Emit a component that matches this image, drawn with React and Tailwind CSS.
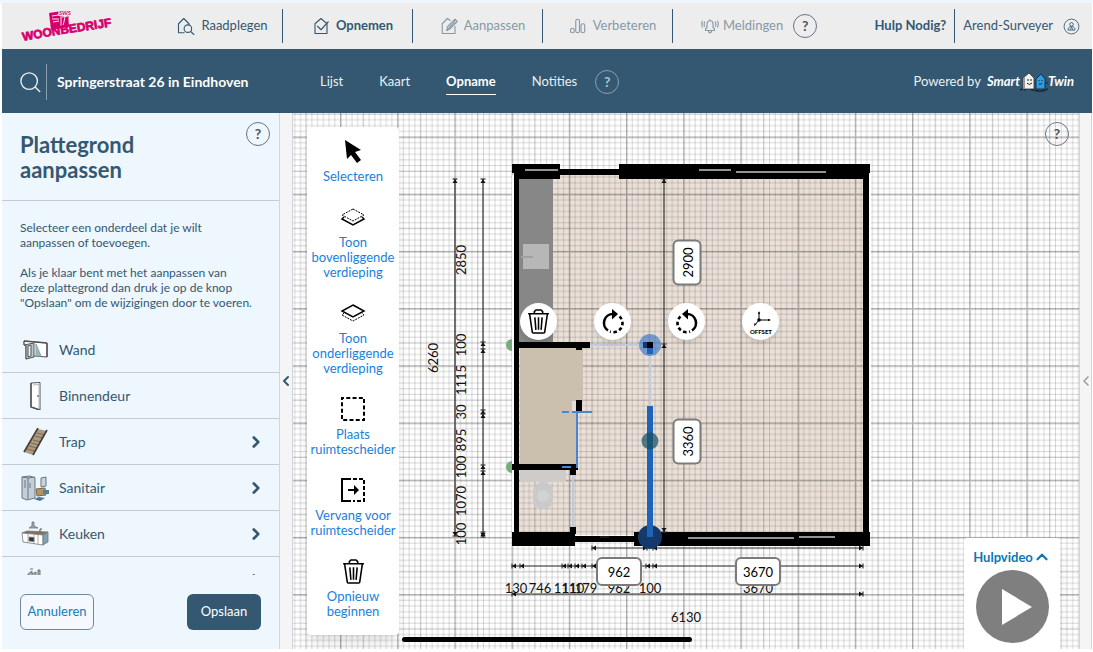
import { useState } from 'react';
import { ChevronLeft, ChevronRight, ChevronUp } from 'lucide-react';

/* ---------- small icons ---------- */

function Svg({ size = 18, children, className = '', box = 24, sw = 1.5 }) {
  return (
    <svg
      width={size}
      height={size}
      viewBox={`0 0 ${box} ${box}`}
      fill="none"
      stroke="currentColor"
      strokeWidth={sw}
      strokeLinejoin="round"
      className={`shrink-0 ${className}`}
      aria-hidden="true"
    >
      {children}
    </svg>
  );
}

const HouseSearchIcon = () => (
  <Svg size={18}>
    <path d="M10 21H2V9l7-7 7 7v2" />
    <circle cx="14.500" cy="15.500" r="5" />
    <path d="M18 19l5 5" />
  </Svg>
);

const HouseCheckIcon = () => (
  <Svg size={18}>
    <path d="M4 22V9l8-7 8 7v13z" />
    <path d="M7 12l5 5 10-11" />
  </Svg>
);

const HouseEditIcon = () => (
  <Svg size={18}>
    <path d="M20 12v10H3V9l7-7 4 3" />
    <path d="M9 18l1-5L20 3l3 3-10 10z" />
    <path d="M9 18L20 6" />
  </Svg>
);

const ChartIcon = () => (
  <Svg size={18}>
    <rect x="2" y="15" width="5" height="6" rx="2.500" />
    <rect x="9" y="3" width="5" height="18" rx="2.500" />
    <rect x="16" y="9" width="5" height="12" rx="2.500" />
  </Svg>
);

const BellIcon = () => (
  <Svg size={18}>
    <path d="M6 18v-2l2-2V9a4 4 0 0 1 8 0v5l2 2v2z" />
    <path d="M10 18a2 3 0 0 0 4 0M12 3v2" />
    <path d="M5 6c-1 2-1 5 0 7M2 5c-2 3-1 6 0 9M19 6c1 2 1 5 0 7M22 5c2 3 1 6 0 9" />
  </Svg>
);

const UserIcon = () => (
  <Svg size={17} sw={1.2}>
    <circle cx="12" cy="12" r="10.500" />
    <circle cx="12" cy="9" r="2.500" />
    <path d="M7 17c0-3 2-5 5-5s5 2 5 5zM10 17l2-4 2 4" />
  </Svg>
);

const SearchIcon = () => (
  <Svg size={22}>
    <circle cx="10" cy="11" r="9" />
    <path d="M16.500 17.500L22 23" />
  </Svg>
);

const TrashIcon = ({ size }) => (
  <Svg size={size} sw={1.5}>
    <path d="M2 4.500h20M8 4V2.500L9.500 1h5L16 2.500V4M3.500 5l2.500 17q0 1 1 1h10q1 0 1-1l2.500-17" />
    <path d="M8.500 8l1 12M12 8v12M15.500 8l-1 12" />
  </Svg>
);

const CursorIcon = () => (
  <svg width="26" height="26" viewBox="0 0 26 26" aria-hidden="true">
    <path d="M5 2l16 10-6 2 6 8-4 3-6-8-4 4z" fill="black" />
  </svg>
);

const LayersIcon = ({ upperDashed }) => (
  <svg width="26" height="20" viewBox="0 0 26 20" fill="none" stroke="black" aria-hidden="true">
    {upperDashed ? (
      <>
        <path d="M13 2l11 6-11 6L2 8z" strokeDasharray="2 1" />
        <path d="M4 10l-2 2 11 6 11-6-2-2" strokeWidth="1.500" />
      </>
    ) : (
      <>
        <path d="M13 2l11 6-11 6L2 8z" strokeWidth="1.500" />
        <path d="M4 10l-2 2 11 6 11-6-2-2" strokeDasharray="2 1" />
      </>
    )}
  </svg>
);

const DashedBoxIcon = () => (
  <svg width="26" height="26" viewBox="0 0 26 26" fill="none" stroke="black" strokeWidth="2" aria-hidden="true">
    <path d="M2 2h22v22H2z" strokeDasharray="4 2.280" strokeDashoffset="2" />
  </svg>
);

const ReplaceBoxIcon = () => (
  <svg width="26" height="26" viewBox="0 0 26 26" fill="none" stroke="black" strokeWidth="2" aria-hidden="true">
    <path d="M11 2H2v22h9" />
    <path d="M13 2h11v22H13" strokeDasharray="4 2" />
    <path d="M8 13h8" />
    <path d="M14 8l5 5-5 5z" fill="black" stroke="none" />
  </svg>
);

const RotateIcon = ({ mirrored }) => (
  <svg width="26" height="26" viewBox="0 0 26 26" fill="none" stroke="black" strokeWidth="2.600" aria-hidden="true">
    <g transform={mirrored ? 'translate(26 0) scale(-1 1)' : undefined}>
      <path d="M8 21.500a9 9 0 0 1 5-16.500" />
      <path d="M12 0l6 5-6 5.500z" fill="black" stroke="none" />
      <path d="M19.500 7.500a9 9 0 0 1-9.500 15" strokeDasharray="3.500 2.500" />
    </g>
  </svg>
);

const OffsetIcon = () => (
  <svg width="30" height="30" viewBox="0 0 30 30" fill="none" stroke="black" strokeWidth="1" aria-hidden="true">
    <path d="M13 13V5M13 13h11M13 13l-4 5" />
    <circle cx="13" cy="13" r="1.800" fill="black" stroke="none" />
    <path d="M12 7l1-3 1 3zM22 12l3 1-3 1zM8 19l.500-3 2 1.500z" fill="black" stroke="none" />
    <text x="15" y="27" textAnchor="middle" fontSize="6" fontWeight="900" fill="black" stroke="none">
      OFFSET
    </text>
  </svg>
);

/* ---------- part illustrations ---------- */

const WallArt = () => (
  <svg width="28" height="28" viewBox="0 0 28 28" stroke="#555" strokeWidth="1" aria-hidden="true">
    <path d="M3 5l23 2v14l-13-1L5 23V10L3 9z" fill="#fff" />
    <path d="M3 5v4l10-2v14l-8 2V9" fill="#bcc8ce" />
    <path d="M7 10l3-1v11l-3 1z" fill="#e9eef0" />
    <path d="M15 20V8l5 12z" fill="#9fb6c2" stroke="#8aa" />
    <path d="M3 5l23 2M26 7v14" strokeWidth="1.500" />
  </svg>
);

const DoorArt = () => (
  <svg width="28" height="28" viewBox="0 0 28 28" stroke="#555" strokeWidth="1" aria-hidden="true">
    <path d="M10 1l9-.500V28l-9-3z" fill="#fff" />
    <path d="M12 3l6-.500V26" fill="none" stroke="#bbb" />
    <path d="M10 1v24l9 3" fill="none" strokeWidth="1.500" />
    <circle cx="17" cy="14" r="1" fill="#777" stroke="none" />
  </svg>
);

const StairsArt = () => (
  <svg width="28" height="28" viewBox="0 0 28 28" aria-hidden="true">
    <path d="M17 1l9 2L12 27l-9-3z" fill="#ab9a80" />
    <path d="M16 5l8 2M14 8l8 2M12 12l8 2M10 15l8 2M8 18l8 2M6 21l8 2" stroke="#7b6a54" />
    <path d="M17 0L3 24M26 2L12 27" stroke="#4a4038" strokeWidth="1.700" />
  </svg>
);

const SanitaryArt = () => (
  <svg width="28" height="28" viewBox="0 0 28 28" stroke="#6b7680" strokeWidth="1" aria-hidden="true">
    <path d="M1 3l8-1 5 2v20l-8 2-5-2z" fill="#c3ced8" />
    <path d="M7 4v21M1 3l6 1 7-1M9 9v5M4 6v8" fill="none" />
    <path d="M20 4l5-1v9l-5 1z" fill="#c9d4dd" />
    <path d="M15 15l9-1 1 7-9 1z" fill="#b09468" stroke="#7c6845" />
    <path d="M22 16h6v4h-6z" fill="#4f83a6" stroke="none" />
    <path d="M13 25l5-2 6 1-5 3z" fill="#3b79a5" stroke="none" />
  </svg>
);

const KitchenArt = () => (
  <svg width="28" height="28" viewBox="0 0 28 28" stroke="#777" strokeWidth=".800" aria-hidden="true">
    <path d="M11 2h2v4l4 2H8l3-2z" fill="#9aa4ab" />
    <path d="M1 13l5-2 21 1-5 3z" fill="#8a6f55" />
    <path d="M1 13l21 2v10L2 22z" fill="#fff" />
    <path d="M22 15l5-3v10l-5 3z" fill="#7fa1b5" />
    <path d="M7 14v9M13 15v9M17 15v9" fill="none" stroke="#999" />
    <path d="M8 17l5 .500v4l-5-.500z" fill="#333" />
    <path d="M19 12V9h2" fill="none" stroke="#333" />
  </svg>
);

const InstallationArt = () => (
  <svg width="28" height="28" viewBox="0 0 28 28" stroke="#777" strokeWidth="1" aria-hidden="true">
    <path d="M7 8l4-3v3l4-2v8H7zM17 4h2v10h-2z" fill="#a6adb2" />
    <path d="M9 3h3" />
  </svg>
);

/* ---------- header ---------- */

function HelpButton({ tone = 'dark' }) {
  const tones = {
    dark: 'border-gray-500 text-gray-600',
    light: 'border-[#8ba1b1] text-[#b5c3cd]',
  };
  return (
    <button
      type="button"
      aria-label="Help"
      className={`flex size-6 shrink-0 items-center justify-center rounded-full border text-sm font-bold ${tones[tone]}`}
    >
      ?
    </button>
  );
}

const Logo = () => (
  <svg width="96" height="34" viewBox="0 0 96 34" className="shrink-0" aria-label="Woonbedrijf" role="img">
    <path d="M29 4l19-3 1 17-18 3z" fill="#d6006d" />
    <path d="M32 7l7-1M32 10h7M33 13l6-1M41 3v14M45 8l-2 9M42 8l6-1" stroke="#ededed" strokeWidth="1" />
    <text x="39" y="6" fontSize="6" fontStyle="italic" fontWeight="700" fill="#d6006d" stroke="#ededed" strokeWidth="2" paintOrder="stroke">
      SWS
    </text>
    <path id="logo-curve" d="M3 32C30 27 55 23 95 17" fill="none" />
    <text className="font-['Liberation_Sans']" fontSize="12" fontWeight="700" fill="#d6006d" stroke="#d6006d" strokeWidth=".700">
      <textPath href="#logo-curve">WOONBEDRIJF</textPath>
    </text>
  </svg>
);

const mainNav = [
  { label: 'Raadplegen', icon: HouseSearchIcon, style: 'text-[#345871]' },
  { label: 'Opnemen', icon: HouseCheckIcon, style: 'text-[#345871] font-bold' },
  { label: 'Aanpassen', icon: HouseEditIcon, style: 'text-[#8799a6]' },
  { label: 'Verbeteren', icon: ChartIcon, style: 'text-[#8799a6]' },
];

function TopBar() {
  return (
    <header className="flex h-[46px] shrink-0 items-center bg-[#ededed] text-[13px]">
      <div className="w-[151px] shrink-0 pl-[18px]">
        <Logo />
      </div>
      <nav className="flex items-center">
        {mainNav.map(({ label, icon: Icon, style }) => (
          <a
            key={label}
            href="#"
            className={`flex h-[34px] w-[130px] items-center justify-center gap-1.5 border-r border-[#345871] pl-2.5 ${style}`}
          >
            <Icon />
            {label}
          </a>
        ))}
        <a href="#" className="ml-7 flex items-center gap-1 text-[#8799a6]">
          <BellIcon />
          Meldingen
        </a>
      </nav>
      <div className="ml-2.5">
        <HelpButton />
      </div>
      <div className="ml-auto flex items-center pr-3 text-[#345871]">
        <a href="#" className="pr-2 font-bold">Hulp Nodig?</a>
        <a href="#" className="flex h-[34px] items-center gap-2.5 border-l border-[#345871] pl-2">
          Arend-Surveyer
          <UserIcon />
        </a>
      </div>
    </header>
  );
}

const TwinHouses = () => (
  <svg width="28" height="20" viewBox="0 0 28 20" aria-hidden="true">
    <path d="M0 18q7-3 14 0t14-1" stroke="#1b2b38" strokeWidth="1.500" fill="none" />
    <path d="M3 17V6l6-5 5 5v11z" fill="#f3f1ee" stroke="#333" strokeWidth=".800" />
    <path d="M3 6v11h2V5z" fill="#999" />
    <path d="M16 17V7l5-5 4 5v10z" fill="#2f9be0" stroke="#123" strokeWidth=".800" />
    <path d="M8 7v2M11 7v2M7 11q2 3 5 0M19 8v1M22 8v1M19 12q2 1 3-1M5 17v2M12 17v2M18 17v2M23 17v2M25 11h3" stroke="#222" fill="none" />
  </svg>
);

function SubBar() {
  return (
    <div className="flex h-16 shrink-0 items-center bg-[#345871] pt-0.5 text-[13px] text-[#e9f0f5]">
      <div className="flex w-[278px] shrink-0 items-center pl-[18px]">
        <button type="button" aria-label="Zoeken">
          <SearchIcon />
        </button>
        <h1 className="ml-1 flex h-9 items-center border-l border-[#8ba1b1] pl-2.5 text-sm font-bold text-white">
          Springerstraat 26 in Eindhoven
        </h1>
      </div>
      <nav className="ml-10 flex items-center gap-9">
        <a href="#">Lijst</a>
        <a href="#">Kaart</a>
        <a href="#" className="-mb-px border-b border-white py-0.5 font-bold text-white">Opname</a>
        <a href="#">Notities</a>
      </nav>
      <div className="ml-[18px]">
        <HelpButton tone="light" />
      </div>
      <div className="ml-auto flex items-center pr-[18px]">
        <span className="mr-1.5">Powered by</span>
        <span className="font-bold text-white italic">Smart</span>
        <TwinHouses />
        <span className="font-bold text-white italic">Twin</span>
      </div>
    </div>
  );
}

/* ---------- side panel ---------- */

const parts = [
  { label: 'Wand', art: WallArt },
  { label: 'Binnendeur', art: DoorArt },
  { label: 'Trap', art: StairsArt, more: true },
  { label: 'Sanitair', art: SanitaryArt, more: true },
  { label: 'Keuken', art: KitchenArt, more: true },
  { label: '', art: InstallationArt, more: true },
];

function SidePanel() {
  return (
    <aside className="flex w-[278px] shrink-0 flex-col border-r border-gray-300 bg-[#eef6fe] text-[#345871]">
      <div className="flex items-start justify-between border-b border-[#c6cbd0] pt-[9px] pr-[9px] pb-[18px] pl-[18px]">
        <h2 className="w-40 pt-2.5 text-[22px] leading-[25px] font-bold">Plattegrond aanpassen</h2>
        <HelpButton />
      </div>
      <div className="min-h-0 flex-1 overflow-hidden">
        <div className="space-y-[15px] px-[18px] pt-[19px] pb-[17px] text-xs leading-[15px]">
          <p>
            Selecteer een onderdeel dat je wilt
            <br />
            aanpassen of toevoegen.
          </p>
          <p>
            Als je klaar bent met het aanpassen van
            <br />
            deze plattegrond dan druk je op de knop
            <br />
            "Opslaan" om de wijzigingen door te voeren.
          </p>
        </div>
        <ul>
          {parts.map(({ label, art: Art, more }) => (
            <li key={label} className="border-b border-[#c6cbd0]">
              <button
                type="button"
                aria-label={label || 'Installatie'}
                className="flex h-[45px] w-full items-center pr-3.5 pl-[19px] text-left text-sm"
              >
                <Art />
                <span className="ml-2.5 flex-1">{label}</span>
                {more && <ChevronRight size={18} strokeWidth={3.5} />}
              </button>
            </li>
          ))}
        </ul>
      </div>
      <div className="flex justify-between px-[18px] pt-[19px] pb-[19px] text-[13px]">
        <button type="button" className="h-9 w-[74px] rounded-md border border-[#6f8aa0] bg-white/40 text-[#147dba]">
          Annuleren
        </button>
        <button type="button" className="h-9 w-[74px] rounded-md bg-[#345871] text-white">
          Opslaan
        </button>
      </div>
    </aside>
  );
}

/* ---------- floor plan ---------- */

const PERIOD = 57.2;
const steps = [1, 2, 3, 4, 5, 6, 7, 8, 9];

function Grid() {
  return (
    <pattern id="grid" x="47" y="23.500" width={PERIOD} height={PERIOD} patternUnits="userSpaceOnUse">
      {steps.map((i) => (
        <g key={i} stroke="black" strokeWidth="1">
          <path d={`M${(i * PERIOD) / 10 + 0.5} 0v58`} strokeOpacity={i === 4 ? 0.26 : 0.15} />
          <path d={`M0 ${(i * PERIOD) / 10 + 0.5}h58`} strokeOpacity={i === 6 ? 0.26 : 0.15} />
        </g>
      ))}
      <path d="M.700 0v58M0 .700h58" stroke="black" strokeOpacity=".320" strokeWidth="1.400" />
    </pattern>
  );
}

// Dimension line with an arrow and a stop at each mark
function Ruler({ at, marks, vertical }) {
  const first = marks[0];
  const last = marks[marks.length - 1];
  return (
    <g
      transform={vertical ? `translate(${at} 0) rotate(90) scale(1 -1)` : `translate(0 ${at})`}
      stroke="#333"
      fill="#111"
      strokeWidth="1.200"
    >
      <path d={`M${first} 0H${last}`} />
      {marks.map((m) => (
        <g key={m}>
          <path d={`M${m} -2.500v5`} />
          <path
            d={m === last ? `M${m - 4} -2.500l4 2.500-4 2.500z` : `M${m + 4} -2.500l-4 2.500 4 2.500z`}
            stroke="none"
          />
        </g>
      ))}
    </g>
  );
}

const leftSizes = [
  ['2850', 147],
  ['100', 232],
  ['1115', 267],
  ['30', 299],
  ['895', 327],
  ['100', 354],
  ['1070', 388],
  ['100', 421],
];

const bottomSizes = [
  ['130', 223],
  ['746', 247],
  ['111', 272],
  ['110', 280],
  ['179', 293],
  ['962', 326],
  ['100', 357],
  ['3670', 465],
];

function FloorPlan() {
  return (
    <svg className="absolute inset-0 size-full" aria-label="Plattegrond" role="img">
      <defs>
        <Grid />
      </defs>

      <rect x="226" y="62" width="344" height="360" fill="#eae0d7" />
      <rect width="100%" height="100%" fill="url(#grid)" />
      <path d="M220 62v360M577 60v360" stroke="white" strokeWidth="2" />

      {/* kitchen top, hall and toilet */}
      <rect x="226" y="66" width="34" height="164" fill="#878787" />
      <rect x="230" y="131" width="26" height="25" fill="#b7b7b7" />
      <path d="M228 144h12" stroke="#a0a0a0" strokeWidth="2" />
      <path d="M227 235h63v55h-6v62h-57z" fill="#cbc0ae" />
      <rect x="279" y="288" width="4" height="10" fill="#e6ddd4" />
      <rect x="227" y="357" width="46" height="12" fill="#cfcbc8" />
      <rect x="240" y="369" width="20" height="27" rx="9" fill="#cacaca" />
      <circle cx="250" cy="383" r="6" fill="#d3d3d3" />

      {/* green handles */}
      <path d="M219 227a5 5 0 0 0 0 10zM219 349a5 5 0 0 0 0 10z" fill="#76ad7a" />
      <path d="M219 227a5 5 0 0 0 0 10M219 349a5 5 0 0 0 0 10" fill="none" stroke="#76ad7a" strokeWidth="2" />

      {/* outer walls */}
      <path d="M221 52h5v380h-5zM570 52h6v380h-6z" />
      <path d="M219 51h48v15h-46v-6h-2zM267 56h60v6h-60zM326 51h251v9h-2v6H326z" />
      <path d="M219 419h63v14h-63zM281 423h61v6h-61zM341 419h236v14H341z" />
      <path
        d="M232 57h33M406 57h32M443 59h90M395 425h106M506 424h36"
        stroke="#c4c4c4"
        strokeWidth="1.500"
      />
      <path d="M307 424h9" stroke="#333" />

      {/* inner walls */}
      <path d="M226 229h71v6h-71zM283 234h6v3h-6zM283 287h6v12h-6z" />
      <path d="M219 351h66v6h-2v5h-6v-5h-58zM277 414h6v7h-6z" />
      <path d="M297 232h48M280 362v52" stroke="#bccbe2" strokeWidth="2" />
      <path d="M357 243v50" stroke="#bfcce0" strokeWidth="2" />
      <path d="M284 300v55M269 299h7M279 299h20M269 354h9" stroke="#4a84d2" strokeWidth="2" fill="none" />

      <Ruler at={162} marks={[66, 423]} vertical />
      <Ruler at={190} marks={[66, 229, 236, 297, 301, 352, 358, 419, 424]} vertical />
      <Ruler at={371} marks={[66, 231, 419]} vertical />
      <Ruler at={435} marks={[299, 354]} />
      <Ruler at={435} marks={[360, 570]} />
      <Ruler at={453} marks={[219, 227, 269, 275, 282, 289, 299, 353, 360, 570]} />
      <Ruler at={481} marks={[219, 570]} />

      {/* selected wall */}
      <circle cx="357" cy="232" r="11" fill="#2a6cc4" fillOpacity=".600" />
      <path d="M350 229h5v6h-5z" fill="#0d3a75" />
      <path d="M354 235h6v6h-6z" fill="#1d64b8" />
      <path d="M354 229h6v6h-6z" />
      <circle cx="357" cy="424" r="12" fill="#15396a" />
      <path d="M354 293h6v131h-6z" fill="#1d64b8" />
      <circle cx="357" cy="328" r="8.500" fill="#174f5c" fillOpacity=".700" />

      <g fontSize="13" fill="#111" textAnchor="middle">
        {leftSizes.map(([value, y]) => (
          <text key={y} transform={`translate(173 ${y}) rotate(-90)`}>
            {value}
          </text>
        ))}
        <text transform="translate(145 245) rotate(-90)">6260</text>
        {bottomSizes.map(([value, x]) => (
          <text key={x} x={x} y="480">
            {value}
          </text>
        ))}
        <text x="393" y="509">6130</text>
      </g>
    </svg>
  );
}

const sizeFields = [
  { name: 'Lengte boven', value: '2900', place: 'left-[371px] top-[135px] -rotate-90' },
  { name: 'Lengte onder', value: '3360', place: 'left-[371px] top-[314px] -rotate-90' },
  { name: 'Breedte links', value: '962', place: 'left-[303px] top-[444px]' },
  { name: 'Breedte rechts', value: '3670', place: 'left-[442px] top-[444px]' },
];

function SizeField({ name, value, place }) {
  const [size, setSize] = useState(value);
  return (
    <input
      aria-label={name}
      value={size}
      onChange={(e) => setSize(e.target.value)}
      className={`absolute h-[29px] w-[46px] rounded-md border-2 border-[#7b7b7b] bg-white text-center text-[13px] text-black ${place}`}
    />
  );
}

const wallActions = [
  { name: 'Verwijderen', icon: <TrashIcon size={25} />, place: 'left-[227px]' },
  { name: 'Rechtsom draaien', icon: <RotateIcon />, place: 'left-[301px]' },
  { name: 'Linksom draaien', icon: <RotateIcon mirrored />, place: 'left-[375px]' },
  { name: 'Offset', icon: <OffsetIcon />, place: 'left-[449px]' },
];

const tools = [
  { label: 'Selecteren', icon: <CursorIcon /> },
  { label: 'Toon bovenliggende verdieping', icon: <LayersIcon upperDashed /> },
  { label: 'Toon onderliggende verdieping', icon: <LayersIcon /> },
  { label: 'Plaats ruimtescheider', icon: <DashedBoxIcon /> },
  { label: 'Vervang voor ruimtescheider', icon: <ReplaceBoxIcon /> },
  { label: 'Opnieuw beginnen', icon: <TrashIcon size={25} /> },
];

function Toolbar() {
  return (
    <div className="absolute top-3.5 left-3.5 flex w-[92px] flex-col gap-[19px] rounded bg-white pt-2.5 pb-4 shadow-lg">
      {tools.map(({ label, icon }) => (
        <button key={label} type="button" className="flex flex-col items-center text-[13px] leading-[15px] text-[#1a7fdc]">
          <span className="mb-1 flex h-7 items-center text-black">{icon}</span>
          {label}
        </button>
      ))}
    </div>
  );
}

function Canvas() {
  return (
    <main className="relative min-w-0 flex-1 overflow-hidden border-x border-gray-300 bg-white">
      <FloorPlan />
      {sizeFields.map((field) => (
        <SizeField key={field.name} {...field} />
      ))}
      {wallActions.map(({ name, icon, place }) => (
        <button
          key={name}
          type="button"
          aria-label={name}
          className={`absolute top-[190px] flex size-[37px] items-center justify-center rounded-full bg-white text-black shadow-md ${place}`}
        >
          {icon}
        </button>
      ))}
      <Toolbar />
      <div className="absolute top-[9px] right-2.5">
        <HelpButton />
      </div>
      <div className="absolute bottom-[7px] left-[109px] h-[5px] w-[290px] rounded-full bg-black" />
      <div className="absolute right-[19px] bottom-0 flex w-24 flex-col items-center rounded-t bg-white pt-2.5 pb-1.5 shadow-lg">
        <button type="button" className="flex items-center text-[13px] leading-[18px] font-bold text-[#0b76ba]">
          Hulpvideo
          <ChevronUp size={18} strokeWidth={3} />
        </button>
        <button type="button" aria-label="Afspelen" className="mt-1">
          <svg width="73" height="73" viewBox="0 0 73 73" aria-hidden="true">
            <circle cx="36.500" cy="36.500" r="36.500" fill="#7f7f7f" />
            <path d="M26 19l30 18-30 18z" fill="white" />
          </svg>
        </button>
      </div>
    </main>
  );
}

export default function App() {
  return (
    <div className="flex h-screen flex-col border-t-[3px] border-b-[3px] border-t-[#f0f5fc] border-b-white bg-white pr-px pl-0.5 font-['Lato',sans-serif]">
      <TopBar />
      <SubBar />
      <div className="flex min-h-0 flex-1">
        <SidePanel />
        <button type="button" aria-label="Paneel sluiten" className="flex w-3 shrink-0 items-center justify-center bg-[#f5f5f5] text-[#345871]">
          <ChevronLeft size={16} strokeWidth={3} className="shrink-0" />
        </button>
        <Canvas />
        <button type="button" aria-label="Paneel openen" className="flex w-3 shrink-0 items-center justify-center border-r border-gray-300 bg-[#f5f5f5] text-gray-400">
          <ChevronLeft size={16} strokeWidth={2.5} className="shrink-0" />
        </button>
      </div>
    </div>
  );
}
